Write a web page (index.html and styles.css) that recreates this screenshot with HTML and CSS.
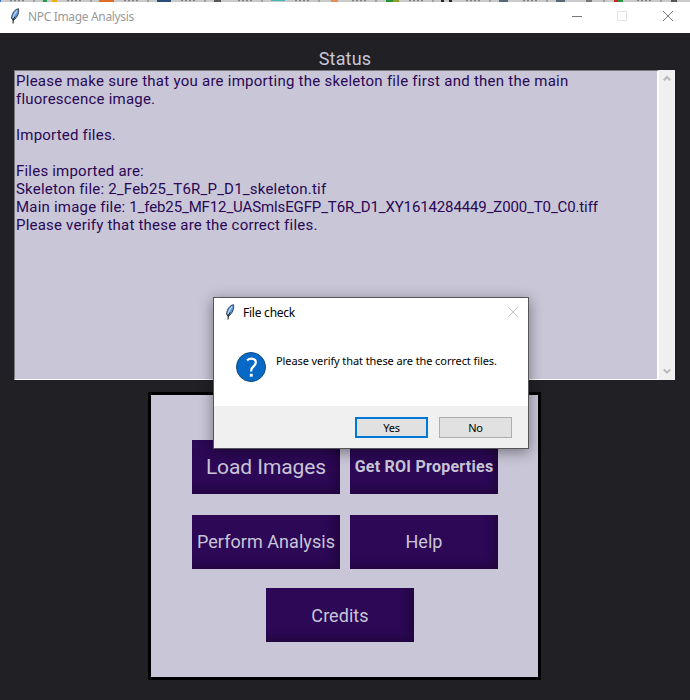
FILE: index.html
```html
<!DOCTYPE html>
<html lang="en">
<head>
<meta charset="utf-8">
<title>NPC Image Analysis</title>
<link rel="stylesheet" href="styles.css">
</head>
<body>
<svg width="0" height="0" class="defs">
  <symbol id="feather" viewBox="0 0 10 16">
    <path d="M8.500.7C5 1.200 2 5 1.500 10l1.500 2.500C6 11 9.500 6 8.500.7Z" fill="#5f98dc" stroke="#1c2330" stroke-width=".8"/>
    <path d="M7 2.500 4 7l-.8 3" fill="none" stroke="#b9dcfa" stroke-width="1.300"/>
    <path d="M5 8.500 3.300 11.500 3 15.500" fill="none" stroke="#111" stroke-width="1"/>
  </symbol>
</svg>
<div class="app">
  <svg class="strip" viewBox="0 0 690 2" preserveAspectRatio="none">
    <path d="M0 0h690v2H0z" fill="#c9cbcb"/>
    <path d="M10 .6h14M67 .6h14M124 .6h14M181 .6h14M238 .6h14M295 .6h14M352 .6h14M409 .6h14M466 .6h14M523 .6h14M637 .6h14" stroke="#807b84" stroke-width="1.2" stroke-dasharray="2 2"/>
    <path d="M34 0v2M91 0v2M148 0v2M205 0v2M262 0v2M319 0v2M376 0v2M433 0v2M490 0v2M547 0v2M604 0v2M661 0v2" stroke="#707477"/>
    <path d="M0 0h1v2H0z" fill="#3474cd"/>
    <path d="M43 0h4v2h-4z" fill="#26994a"/><path d="M52 0h5v2h-5z" fill="#edae12"/>
    <path d="M99 0h15v2H99z" fill="#df6c28"/><path d="M157 0h14v2h-14z" fill="#2c4c79"/>
    <path d="M214 0h7v2h-7z" fill="#56585b"/><path d="M271 0h14v1h-14z" fill="#42b9ad"/>
    <path d="M331 0h7v2h-7z" fill="#e88b55"/><path d="M386 0h7v2h-7z" fill="#239832"/><path d="M393 0h6v2h-6z" fill="#929c28"/>
    <path d="M441 0h3v2h-3zM449 0h3v2h-3z" fill="#252525"/>
    <path d="M499 0h9v2h-9zM556 0h9v2h-9z" fill="#556a78"/><path d="M586 0h6v2h-6z" fill="#777"/>
    <path d="M614 0h4v2h-4z" fill="#cc2520"/><path d="M618 0h5v2h-5z" fill="#28943b"/><path d="M671 0h6v2h-6z" fill="#555"/>
  </svg>
  <header class="titlebar">
    <svg class="feather"><use href="#feather"/></svg>
    <span class="title">NPC Image Analysis</span>
    <svg class="controls" viewBox="0 0 110 14" fill="none">
      <path d="M3 7.5h10" stroke="#777"/><path d="M48.500 2.500h9v9h-9z" stroke="#e3e3e3"/><path d="m94 2 10 10m0-10L94 12" stroke="#777"/>
    </svg>
  </header>
  <main class="content">
    <h1 class="status">Status</h1>
    <section class="log">
      <div class="logtext">
        <div class="wide">Please make sure that you are importing the skeleton file first and then the main</div>
        <div>fluorescence image.</div>
        <div>&nbsp;</div>
        <div>Imported files.</div>
        <div>&nbsp;</div>
        <div>Files imported are:</div>
        <div>Skeleton file: 2_Feb25_T6R_P_D1_skeleton.tif</div>
        <div><span>Main image file: </span><span class="filename">1_feb25_MF12_UASmlsEGFP_T6R_D1_XY1614284449_Z000_T0_C0.tiff</span></div>
        <div>Please verify that these are the correct files.</div>
      </div>
      <div class="scroll">
        <svg width="8" height="7"><path d="m.8 5.200 3.200-3.200 3.200 3.200" fill="none" stroke="#b9b9b9" stroke-width="2"/></svg>
        <svg width="8" height="7"><path d="m.8 1.500 3.200 3.200 3.200-3.200" fill="none" stroke="#b9b9b9" stroke-width="2"/></svg>
      </div>
    </section>
    <section class="panel">
      <div class="row">
        <div class="btn load"><span>Load Images</span></div>
        <div class="btn roi"><span>Get ROI Properties</span></div>
      </div>
      <div class="row">
        <div class="btn raised"><span>Perform Analysis</span></div>
        <div class="btn raised"><span>Help</span></div>
      </div>
      <div class="row last">
        <div class="btn"><span>Credits</span></div>
      </div>
    </section>
  </main>
  <div class="dialog">
    <div class="dhead">
      <svg class="feather"><use href="#feather"/></svg>
      <span class="dtitle">File check</span>
      <svg class="dclose" viewBox="0 0 12 12"><path d="m1 1 10 10m0-10L1 11" stroke="#c4c4c4" fill="none"/></svg>
    </div>
    <div class="dbody">
      <svg class="question" viewBox="0 0 30 30">
        <circle cx="15" cy="15" r="14.500" fill="#0669c6" stroke="#104a80"/>
        <path d="M11 8.300c1.300-1.100 2.900-1.600 4.500-1.600 2.600 0 4.300 1.400 4.300 3.700 0 3.800-4.600 4.200-4.600 8v1.200" fill="none" stroke="#fff" stroke-width="2.200"/>
        <path d="M13.800 21.800h2.900v2.900h-2.900z" fill="#fff"/>
      </svg>
      <span class="dmsg">Please verify that these are the correct files.</span>
    </div>
    <div class="dfoot">
      <div class="dbtn yes"><span>Yes</span></div>
      <div class="dbtn"><span>No</span></div>
    </div>
  </div>
</div>
</body>
</html>
```
FILE: styles.css
```css
* { box-sizing: border-box; }
body { margin: 0; background: #212025; font-family: Roboto, sans-serif; }
.defs { position: absolute; }
.app { position: relative; width: 690px; height: 700px; overflow: hidden; }
svg { display: block; flex: none; }
.strip { width: 690px; height: 2px; }
.titlebar { height: 31px; background: #fff; display: flex; align-items: flex-start; padding-left: 10px; font-family: "Noto Sans", sans-serif; }
.feather { width: 10px; height: 16px; }
.titlebar .feather { margin-top: 6px; }
.title { font-size: 12px; line-height: 17px; margin: 6px 0 0 8px; color: #999; white-space: nowrap; letter-spacing: -.34px; }
.controls { width: 110px; height: 14px; margin: 7px 11px 0 auto; }
.status { margin: 0; height: 37px; padding-top: 15px; font-size: 18px; font-weight: 400; line-height: 22px; text-align: center; color: #c8c6d7; letter-spacing: .2px; }
.log { margin-left: 14px; width: 661px; height: 310px; display: flex; }
.logtext { width: 645px; background: #c8c6d7; border: 1px solid #79777f; border-right: 2px solid #fff; border-bottom-color: #fff; padding: 1px; font-size: 15px; line-height: 18px; color: #2a0855; white-space: nowrap; letter-spacing: .21px; }
.wide { letter-spacing: .26px; }
.filename { letter-spacing: -.12px; }
.scroll { width: 16px; background: #f0f0f0; display: flex; flex-direction: column; align-items: center; justify-content: space-between; padding: 5px 0; }
.panel { width: 393px; height: 288px; margin: 12px 0 0 148px; border: 3px solid #000; background: #c8c6d7; padding: 45px 0 0 41px; }
.row { display: flex; gap: 10px; margin-bottom: 21px; }
.row.last { margin: -2px 0 0 74px; }
.btn { width: 148px; height: 54px; background: #2c0856; color: #c8c6d7; display: flex; align-items: center; justify-content: center; font-size: 18px; white-space: nowrap; letter-spacing: .05px; box-shadow: inset -7px -6px 8px -2px #21063e; }
.raised { padding-bottom: 2px; }
.load { font-size: 21px; letter-spacing: -.08px; }
.roi { font-size: 16px; font-weight: 700; letter-spacing: .25px; padding-bottom: 1px; }
.dialog { position: absolute; left: 213px; top: 297px; width: 316px; height: 152px; border: 1px solid #55555a; background: #fff; box-shadow: 0 3px 13px rgba(0,0,0,.42); font-family: "Noto Sans", sans-serif; color: #000; }
.dhead { height: 34px; display: flex; padding: 6px 9px 0 11px; }
.dtitle { font-size: 12px; line-height: 18px; margin-left: 8px; letter-spacing: -.24px; white-space: nowrap; }
.dclose { width: 12px; height: 12px; margin: 2px 0 0 auto; }
.dbody { height: 74px; display: flex; padding: 20px 0 0 22px; }
.question { width: 30px; height: 30px; }
.dmsg { font-size: 11px; line-height: 16px; margin: 1px 0 0 10px; white-space: nowrap; letter-spacing: -.09px; }
.dfoot { height: 42px; background: #f0f0f0; display: flex; justify-content: flex-end; gap: 11px; padding: 11px 16px 0 0; }
.dbtn { width: 73px; height: 21px; background: #e1e1e1; border: 1px solid #adadad; display: flex; align-items: center; justify-content: center; font-size: 11px; line-height: 16px; letter-spacing: -.2px; }
.yes { border: 2px solid #0078d7; }
```
